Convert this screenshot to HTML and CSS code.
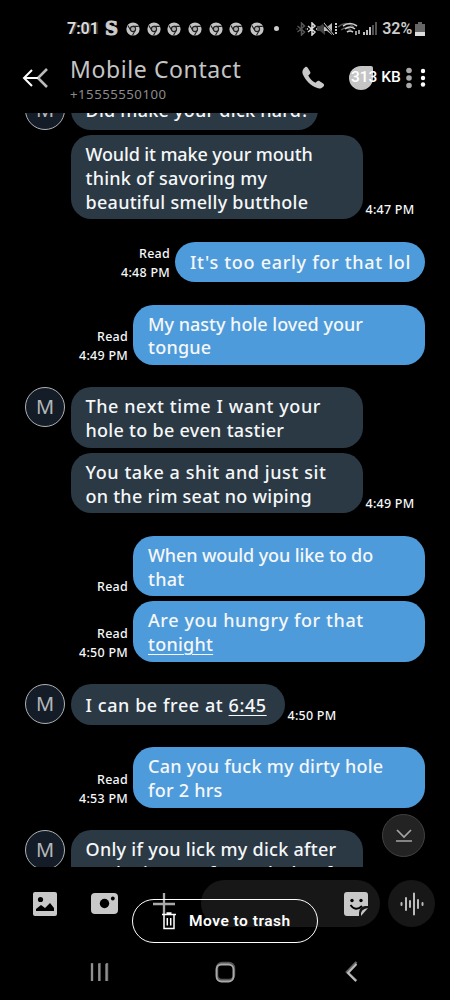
FILE: index.html
```html
<!DOCTYPE html>
<html lang="en">
<head>
<meta charset="utf-8">
<title>Messages</title>
<link rel="stylesheet" href="styles.css">
</head>
<body>
<svg class="defs" width="0" height="0" aria-hidden="true">
  <symbol id="chrome" viewBox="0 0 14 14"><circle cx="7" cy="7" r="6.6" fill="#c4c4c4"/><circle cx="7" cy="7" r="2.6" fill="#aaa" stroke="#222" stroke-width="1.1"/><path d="M7 4.4h5.8M4.7 8.3 1.9 3.6M9.2 8.4 6.5 13.3" stroke="#222" stroke-width="1.1"/></symbol>
  <symbol id="bt" viewBox="0 0 12 14"><path d="M2 4l7 6-3 3V1l3 3-7 6M1 7h1M10 7h1" fill="none" stroke="currentColor" stroke-width="1.5"/></symbol>
</svg>
<div class="phone">
  <div class="status">
    <span class="clock">7:01</span><span class="s-logo">S</span>
    <div class="chromes">
      <svg><use href="#chrome"/></svg><svg><use href="#chrome"/></svg><svg><use href="#chrome"/></svg><svg><use href="#chrome"/></svg><svg><use href="#chrome"/></svg><svg><use href="#chrome"/></svg><svg><use href="#chrome"/></svg>
    </div>
    <i class="dot"></i>
    <svg class="signals" width="83" height="16" viewBox="0 0 83 16">
      <svg x="0" y="1" width="13" height="14" color="#555"><use href="#bt"/></svg>
      <svg x="11" y="1" width="12" height="14" color="#ddd"><use href="#bt"/></svg>
      <path d="M22 5h3l5-4v13l-5-4h-3z" fill="#444"/><path d="M29 6h3l5-4v12l-5-4h-3z" fill="#bbb"/><path d="M28 2l11 12" stroke="#000" stroke-width="2"/><path d="M29 2l10 12" stroke="#ccc"/><path d="M41 2v12" stroke="#ccc" stroke-width="2" stroke-dasharray="2 1"/>
      <g fill="none" stroke="#555" stroke-width="1.5"><path d="M43 6q8-7 16 0M46 9q5-4 10 0"/></g>
      <g fill="none" stroke="#ccc" stroke-width="1.6"><path d="M48 5q7-5 14 0M50 8q5-4 10 0M52 11q3-2 6 0"/></g>
      <path d="M61 10v4M64 9v4" stroke="#ccc" stroke-width="1.5"/>
      <path d="M69 11v3M72 9v5M75 6v8" stroke="#bbb" stroke-width="2"/><path d="M78 4v10M81 1v13" stroke="#666" stroke-width="1.6"/>
    </svg>
    <span class="pct">32%</span>
    <svg class="battery" width="10" height="14" viewBox="0 0 10 14"><path d="M3 0h4v2h3v12H0V2h3z" fill="#666"/><path d="M0 10h10v4H0z" fill="#ddd"/></svg>
  </div>

  <header class="top">
    <svg class="back" width="28" height="22" viewBox="0 0 28 22"><path d="M25 2 16 11 25 20" fill="none" stroke="#bbb" stroke-width="2.6"/><path d="M10 3 2 11l8 8M2 11h14" fill="none" stroke="#fff" stroke-width="2"/></svg>
    <div class="who"><div class="name">Mobile Contact</div><div class="number">+15555550100</div></div>
    <svg class="call" width="24" height="24" viewBox="0 0 24 24"><path d="M4.1 1.2C5 .5 6 .8 6.7 1.800L9 5.500c.7 1 .4 2-.4 2.800L7.300 9.500c1.500 3.300 3.900 5.800 7.200 7.300l1.400-1.300c.8-.8 1.800-1 2.800-.3l3.500 2.300c1.100.8 1.200 1.900.3 2.900-1.500 1.800-3.800 2.600-6.200 1.700C9.500 19.500 4.300 14.300 1.700 8 .7 5.300 2 2.700 4.100 1.200Z" fill="#c9c9c9"/></svg>
    <div class="data"><span>313 KB</span></div>
    <svg class="more" width="20" height="22" viewBox="0 0 20 22"><g fill="#aaa"><circle cx="3" cy="3.500" r="2.800"/><circle cx="3" cy="11" r="2.800"/><circle cx="3" cy="18.500" r="2.800"/></g><g fill="#fff"><circle cx="17" cy="4" r="2.200"/><circle cx="17" cy="11" r="2.200"/><circle cx="17" cy="17.500" r="2.200"/></g></svg>
  </header>

  <main class="chat">
    <section class="group">
      <div class="row"><div class="avatar">M</div><div class="bubble first">Did make your dick hard?</div></div>
      <div class="row"><div class="bubble wide"><span class="tight">Would it make your mouth</span><br>think of savoring my<br><span class="roomy">beautiful smelly butthole</span></div><div class="meta">4:47 PM</div></div>
    </section>
    <section class="group"><div class="row out"><div class="meta">Read<br>4:48 PM</div><div class="bubble early">It's too early for that lol</div></div></section>
    <section class="group"><div class="row out"><div class="meta">Read<br>4:49 PM</div><div class="bubble wide"><span class="even">My nasty hole loved your</span><br>tongue</div></div></section>
    <section class="group">
      <div class="row"><div class="avatar">M</div><div class="bubble wide"><span class="loose">The next time I want your</span><br><span class="roomy">hole to be even tastier</span></div></div>
      <div class="row"><div class="bubble wide"><span class="loose">You take a shit and just sit</span><br>on the rim seat no wiping</div><div class="meta">4:49 PM</div></div>
    </section>
    <section class="group">
      <div class="row out"><div class="meta">Read</div><div class="bubble wide"><span class="tight">When would you like to do</span><br>that</div></div>
      <div class="row out"><div class="meta">Read<br>4:50 PM</div><div class="bubble wide"><span class="loose">Are you hungry for that</span><br><u>tonight</u></div></div>
    </section>
    <section class="group"><div class="row"><div class="avatar">M</div><div class="bubble free loose">I can be free at <u>6:45</u></div><div class="meta">4:50 PM</div></div></section>
    <section class="group"><div class="row out"><div class="meta">Read<br>4:53 PM</div><div class="bubble wide">Can you fuck my dirty hole<br>for 2 hrs</div></div></section>
    <section class="group"><div class="row"><div class="avatar">M</div><div class="bubble wide roomy">Only if you lick my dick after<br><span class="loose">I take it out of your hole. If</span></div></div></section>
    <div class="jump"><svg width="18" height="14" viewBox="0 0 18 14"><path d="M2 1l7 7 7-7M1 12h16" fill="none" stroke="#a5a5a5" stroke-width="1.700"/></svg></div>
  </main>

  <footer class="compose">
    <svg class="gallery" width="24" height="24" viewBox="0 0 24 24"><rect width="24" height="24" rx="2" fill="#c8c8c8"/><circle cx="7.500" cy="7.500" r="2.600"/><path d="M3 19v-2l5-4 4 3 5-5 4 5v3z"/></svg>
    <svg class="camera" width="27" height="21" viewBox="0 0 27 21"><rect width="27" height="21" rx="4" fill="#c8c8c8"/><circle cx="13.500" cy="10.500" r="4.700"/><circle cx="21.800" cy="5.500" r="1.900"/></svg>
    <svg class="plus" width="22" height="22" viewBox="0 0 22 22"><path d="M11 0v22M0 11h22" stroke="#aaa" stroke-width="2.300"/></svg>
    <div class="field"><svg width="24" height="24" viewBox="0 0 24 24"><path d="M3 0h18q3 0 3 3v11h-3q-6 1-6 7v3H3q-3 0-3-3V3q0-3 3-3z" fill="#c8c8c8"/><path d="M17 24q-1-7 7-8z" fill="#c8c8c8"/><circle cx="8" cy="8.500" r="1.700"/><circle cx="17" cy="8.500" r="1.700"/><path d="M6.500 13q5 7 11.500 1" fill="none" stroke="#000" stroke-width="1.800"/></svg></div>
    <div class="voice"><svg width="24" height="24" viewBox="0 0 24 24"><path d="M1.500 11v2M6 6v12M10 9v6M14 1.500v21M18 8v8M22.500 11v2" stroke="#bbb" stroke-width="2" stroke-linecap="round"/></svg></div>
    <button class="trash"><svg width="14" height="18" viewBox="0 0 14 18"><path d="M0 2.500h14M4.500 1h5M2 3v13.500h10V3M5.300 6v7.500M8.700 6v7.500" fill="none" stroke="#fff" stroke-width="1.500"/></svg>Move to trash</button>
  </footer>

  <nav class="nav">
    <svg width="19" height="21" viewBox="0 0 19 21"><path d="M2 2v18M9.500 2v18M17 2v18" stroke="#777" stroke-width="2.400"/><path d="M2 3v17M9 3v17M16 3v17" stroke="#aaa"/></svg>
    <svg width="21" height="22" viewBox="0 0 21 22"><rect x="2" y="2" width="17" height="17" rx="5" fill="none" stroke="#555" stroke-width="2.500"/><rect x="1.500" y="3.500" width="17" height="17" rx="5" fill="none" stroke="#aaa" stroke-width="1.800"/></svg>
    <svg width="13" height="22" viewBox="0 0 13 22"><path d="M11.500 1 2 11l9.500 9" fill="none" stroke="#666" stroke-width="2.500"/><path d="M11.500 3 3 12l8 8" fill="none" stroke="#bbb" stroke-width="2"/></svg>
  </nav>
</div>
</body>
</html>
```
FILE: styles.css
```css
* { box-sizing: border-box; }
body { margin: 0; background: #000; color: #f5f7f8; font-family: "Noto Sans", sans-serif; }
svg { display: block; flex: none; }
.defs { position: absolute; }
.phone { width: 450px; height: 1000px; overflow: hidden; display: flex; flex-direction: column; }

.status { height: 57px; flex: none; display: flex; align-items: center; padding-left: 67px; white-space: nowrap; }
.clock { width: 38px; font: 600 16px Roboto, sans-serif; color: #ddd; text-shadow: 2px 0 #333; }
.s-logo { width: 21px; font: 900 18px "DejaVu Serif", serif; color: #ccc; -webkit-text-stroke: 1px #ccc; }
.chromes { display: flex; gap: 6.700px; }
.chromes svg { width: 14px; height: 14px; }
.dot { width: 5px; height: 5px; border-radius: 50%; background: #ccc; margin: 0 16px 0 10px; }
.signals { margin-right: 4px; }
.pct { width: 33px; font: 600 16px Roboto, sans-serif; color: #ccc; }

.top { height: 56px; flex: none; display: flex; align-items: flex-start; padding: 0 22px; }
.back { margin-top: 10px; }
.who { width: 230px; padding-left: 20px; white-space: nowrap; }
.name { font-size: 23px; line-height: 24px; letter-spacing: .6px; color: #c5c5c5; }
.number { font-size: 13.200px; line-height: 14px; margin-top: 6px; letter-spacing: .5px; color: #8b8b8b; }
.call { margin-top: 9px; margin-left: 21px; }
.data { width: 24px; height: 24px; margin: 9px 0 0 24px; padding-left: 2px; border-radius: 50% 2px 50% 50%; background: #c5c5c5; font: 500 15.500px/22px Roboto, sans-serif; color: #fff; white-space: nowrap; }
.more { margin: 10px 0 0 33px; }

.chat { height: 754px; flex: none; position: relative; overflow: hidden; display: flex; flex-direction: column; gap: 22.400px; padding-left: 25px; padding-right: 25px; }
.group { display: flex; flex-direction: column; gap: 5px; flex: none; }
.group:first-child { margin-top: -23.500px; }
.row { display: flex; align-items: flex-end; padding-left: 45.500px; gap: 3px; }
.row:has(.avatar) { padding-left: 0; }
.avatar { width: 40px; height: 40px; margin-right: 2.500px; align-self: flex-start; flex: none; border: 1.300px solid #aeb2b5; border-radius: 50%; background: #141d27; color: #b4b7ba; font-size: 20px; line-height: 37px; text-align: center; }
.bubble { min-height: 40.500px; padding: 8px 15px 5px; border-radius: 20.250px; background: #2b3945; font-size: 18px; font-weight: 500; line-height: 23.750px; letter-spacing: .25px; white-space: nowrap; flex: none; }
.bubble:not(.wide) { padding-top: 9.500px; padding-bottom: 7px; }
.tight { letter-spacing: -.12px; }
.even { letter-spacing: 0; }
.wide.roomy, .roomy { letter-spacing: .28px; }
.bubble.loose, .loose { letter-spacing: .58px; }
.wide { width: 292px; }
.first { width: 247px; }
.early.bubble { width: 250px; letter-spacing: .7px; }
.free { width: 214px; }
.meta { font-size: 12.500px; font-weight: 500; line-height: 19px; letter-spacing: .25px; white-space: nowrap; }
.out { justify-content: flex-end; padding-left: 0; gap: 5px; }
.out .bubble { background: #4e9bdc; }
.out .meta { text-align: right; }
u { text-decoration-thickness: 1px; text-underline-offset: 3px; }
.jump { position: absolute; left: 382px; top: 701px; width: 43px; height: 43px; border: 1px solid #424242; border-radius: 50%; background: #232323; display: grid; place-items: center; }

.compose { height: 76px; flex: none; position: relative; display: flex; align-items: flex-start; padding: 13px 0 0 33px; }
.gallery { margin-top: 12px; }
.camera { margin: 13px 0 0 34px; }
.plus { margin: 13px 0 0 35px; }
.field { width: 179px; height: 47px; margin-left: 26px; border-radius: 24px; background: #171717; padding: 12px 0 0 143px; }
.voice { width: 47px; height: 47px; margin-left: 8px; border-radius: 50%; background: #171717; display: grid; place-items: center; }
.trash { position: absolute; left: 132px; top: 32px; width: 186px; height: 44px; padding: 0 0 0 29px; border: 1.500px solid #fff; border-radius: 22px; background: none; color: #fff; display: flex; align-items: center; gap: 13px; font: 600 15.500px Roboto, sans-serif; letter-spacing: .5px; white-space: nowrap; }

.nav { display: flex; padding: 18px 0 0 90px; }
.nav svg:nth-child(2) { margin-left: 106px; }
.nav svg:nth-child(3) { margin-left: 109px; }
```
